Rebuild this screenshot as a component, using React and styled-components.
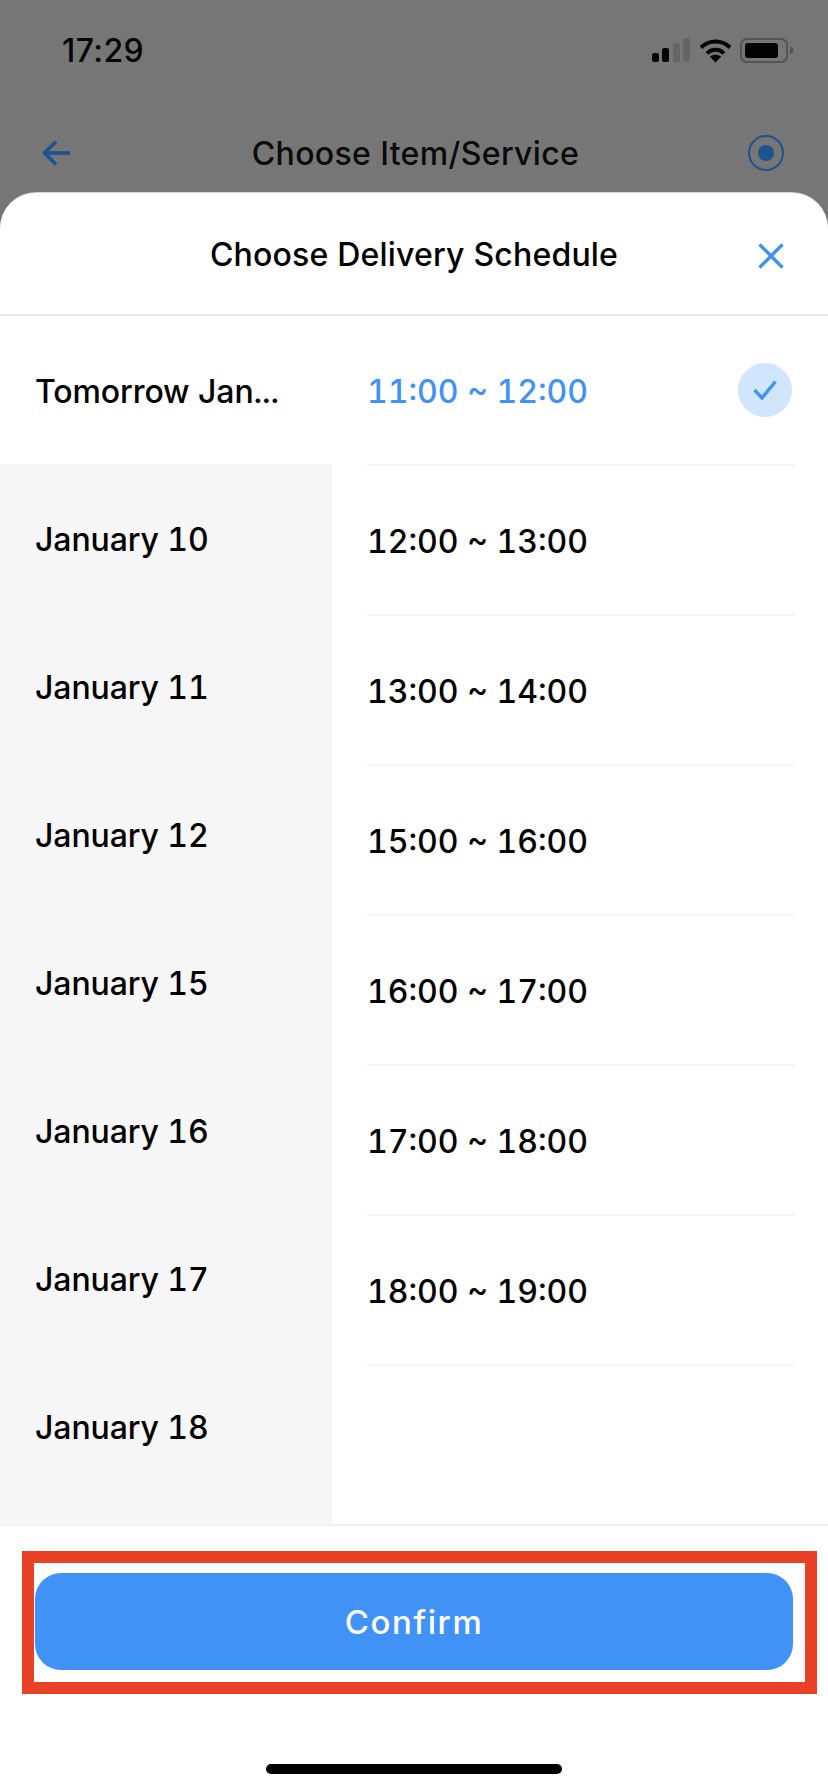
import React from "react";
import styled, { createGlobalStyle } from "styled-components";

const BLUE = "#4192f7";
const DIM_BLUE = "#1d5490";

const GlobalStyle = createGlobalStyle`
  html, body {
    margin: 0;
    padding: 0;
    background: #ffffff;
  }
  * {
    box-sizing: border-box;
  }
`;

const Page = styled.div`
  width: 828px;
  height: 1792px;
  overflow: hidden;
  display: flex;
  flex-direction: column;
  background: #767676;
  color: #000;
  font-family: Inter, "Noto Sans", sans-serif;
`;

const StatusBar = styled.div`
  height: 100px;
  padding: 0 34px 0 62px;
  display: flex;
  align-items: center;
  justify-content: space-between;
  color: #050505;
  font-size: 32px;
  font-weight: 500;
  letter-spacing: 0.4px;
`;

const StatusIcons = styled.div`
  display: flex;
  align-items: center;
  gap: 8px;
`;

const NavBar = styled.div`
  height: 93px;
  padding: 13px 44px 0 42px;
  display: flex;
  align-items: center;
  justify-content: space-between;
`;

const NavTitle = styled.div`
  margin-left: 12px;
  font-size: 32px;
  font-weight: 500;
  letter-spacing: 0.35px;
  color: #0a0a0a;
`;

const Sheet = styled.div`
  flex: 1;
  min-height: 0;
  display: flex;
  flex-direction: column;
  background: #fff;
  border-radius: 36px 36px 0 0;
  box-shadow: 0 -1px 0 #d4d4d4;
`;

const SheetHeader = styled.div`
  position: relative;
  height: 123px;
  flex: none;
  display: flex;
  align-items: center;
  justify-content: center;
  border-bottom: 2px solid #e9e9e9;
`;

const SheetTitle = styled.div`
  font-size: 32px;
  font-weight: 500;
  letter-spacing: 0.2px;
  padding-top: 2px;
`;

const CloseButton = styled.div`
  position: absolute;
  top: 50px;
  right: 44px;
  display: flex;
`;

const Lists = styled.div`
  flex: 1;
  min-height: 0;
  display: flex;
  border-bottom: 2px solid #f1f1f1;
`;

const DateColumn = styled.div`
  width: 332px;
  flex: none;
  display: flex;
  flex-direction: column;
  background: #f6f6f6;
`;

const DateRow = styled.div`
  height: 148px;
  padding: 2px 0 0 35px;
  display: flex;
  align-items: center;
  font-size: 32px;
  font-weight: 500;
  letter-spacing: -0.1px;
  font-variant-numeric: tabular-nums;
  background: ${(p) => (p.$active ? "#fff" : "transparent")};
`;

const SlotColumn = styled.div`
  flex: 1;
  display: flex;
  flex-direction: column;
  padding: 0 34px 0 35px;
`;

const SlotRow = styled.div`
  height: 150px;
  flex: none;
  padding-top: 2px;
  display: flex;
  align-items: center;
  justify-content: space-between;
  border-bottom: 2px solid #f3f3f3;
  font-size: 32px;
  font-weight: 500;
  font-variant-numeric: tabular-nums;
  color: ${(p) => (p.$active ? BLUE : "#000")};
`;

const CheckBadge = styled.div`
  width: 54px;
  height: 54px;
  border-radius: 50%;
  margin: -2px 2px 0 0;
  background: #d1e6fc;
  display: flex;
  align-items: center;
  justify-content: center;
`;

const Footer = styled.div`
  flex: none;
  height: 266px;
  padding: 25px 11px 0 22px;
  display: flex;
  flex-direction: column;
`;

const Highlight = styled.div`
  height: 143px;
  border: 12px solid #e94125;
  padding: 10px 12px 12px 1px;
  background: #fff;
`;

const ConfirmButton = styled.button`
  width: 100%;
  height: 97px;
  border: none;
  border-radius: 26px;
  background: ${BLUE};
  color: #fff;
  font-family: inherit;
  font-size: 33px;
  font-weight: 500;
  letter-spacing: 1.6px;
`;

const HomeIndicator = styled.div`
  width: 296px;
  height: 10px;
  border-radius: 5px;
  background: #000;
  margin: 70px 0 0 244px;
`;

const dates = [
  "January 10",
  "January 11",
  "January 12",
  "January 15",
  "January 16",
  "January 17",
  "January 18",
];

const slots = [
  "12:00 ~ 13:00",
  "13:00 ~ 14:00",
  "15:00 ~ 16:00",
  "16:00 ~ 17:00",
  "17:00 ~ 18:00",
  "18:00 ~ 19:00",
];

const SignalIcon = () => (
  <svg width="39" height="24" viewBox="0 0 39 24">
    <rect x="0" y="15" width="7" height="9" rx="2" fill="#050505" />
    <rect x="10" y="10" width="7" height="14" rx="2" fill="#050505" />
    <rect x="21" y="5" width="7" height="19" rx="2" fill="#656565" />
    <rect x="31" y="0" width="7" height="24" rx="2" fill="#656565" />
  </svg>
);

const WifiIcon = () => (
  <svg width="33" height="25" viewBox="0 0 33 25" fill="none" stroke="#050505" strokeWidth="4">
    <path d="M2 9.5C10 1.5 23 1.5 31 9.5" />
    <path d="M8 15.5C12.5 10.5 20.5 10.5 25 15.5" />
    <path d="M16.5 24.5L10.8 18.6C14 16 19 16 22.2 18.6Z" fill="#050505" stroke="none" />
  </svg>
);

const BatteryIcon = () => (
  <svg width="54" height="25" viewBox="0 0 54 25">
    <rect x="1" y="1" width="46" height="23" rx="6" fill="none" stroke="#555" strokeWidth="2" />
    <rect x="5" y="5" width="33" height="15" rx="3" fill="#030303" />
    <path d="M50 8.5C52.5 9.5 53.5 11 53.5 12.5C53.5 14 52.5 15.5 50 16.5Z" fill="#555" />
  </svg>
);

const BackIcon = () => (
  <svg width="29" height="26" viewBox="0 0 29 26" fill="none" stroke={DIM_BLUE} strokeWidth="3.6">
    <path d="M28 13H3" />
    <path d="M14 1.5L2.5 13L14 24.5" />
  </svg>
);

const RadioIcon = () => (
  <svg width="36" height="36" viewBox="0 0 36 36">
    <circle cx="18" cy="18" r="17" fill="none" stroke={DIM_BLUE} strokeWidth="2" />
    <circle cx="18" cy="18" r="8" fill={DIM_BLUE} />
  </svg>
);

const CloseIcon = () => (
  <svg width="26" height="26" viewBox="0 0 26 26" fill="none" stroke={BLUE} strokeWidth="3.4">
    <path d="M1.5 1.5L24.5 24.5M24.5 1.5L1.5 24.5" />
  </svg>
);

const CheckIcon = () => (
  <svg width="24" height="20" viewBox="0 0 24 20" fill="none" stroke={BLUE} strokeWidth="3.4">
    <path d="M1.5 10L9 18L22.5 1.5" />
  </svg>
);

const App = () => {
  return (
    <Page>
      <GlobalStyle />
      <StatusBar>
        <span>17:29</span>
        <StatusIcons>
          <SignalIcon />
          <WifiIcon />
          <BatteryIcon />
        </StatusIcons>
      </StatusBar>
      <NavBar>
        <BackIcon />
        <NavTitle>Choose Item/Service</NavTitle>
        <RadioIcon />
      </NavBar>
      <Sheet>
        <SheetHeader>
          <SheetTitle>Choose Delivery Schedule</SheetTitle>
          <CloseButton>
            <CloseIcon />
          </CloseButton>
        </SheetHeader>
        <Lists>
          <DateColumn>
            <DateRow $active>Tomorrow Jan...</DateRow>
            {dates.map((d) => (
              <DateRow key={d}>{d}</DateRow>
            ))}
          </DateColumn>
          <SlotColumn>
            <SlotRow $active>
              11:00 ~ 12:00
              <CheckBadge>
                <CheckIcon />
              </CheckBadge>
            </SlotRow>
            {slots.map((s) => (
              <SlotRow key={s}>{s}</SlotRow>
            ))}
          </SlotColumn>
        </Lists>
        <Footer>
          <Highlight>
            <ConfirmButton>Confirm</ConfirmButton>
          </Highlight>
          <HomeIndicator />
        </Footer>
      </Sheet>
    </Page>
  );
};

export default App;
